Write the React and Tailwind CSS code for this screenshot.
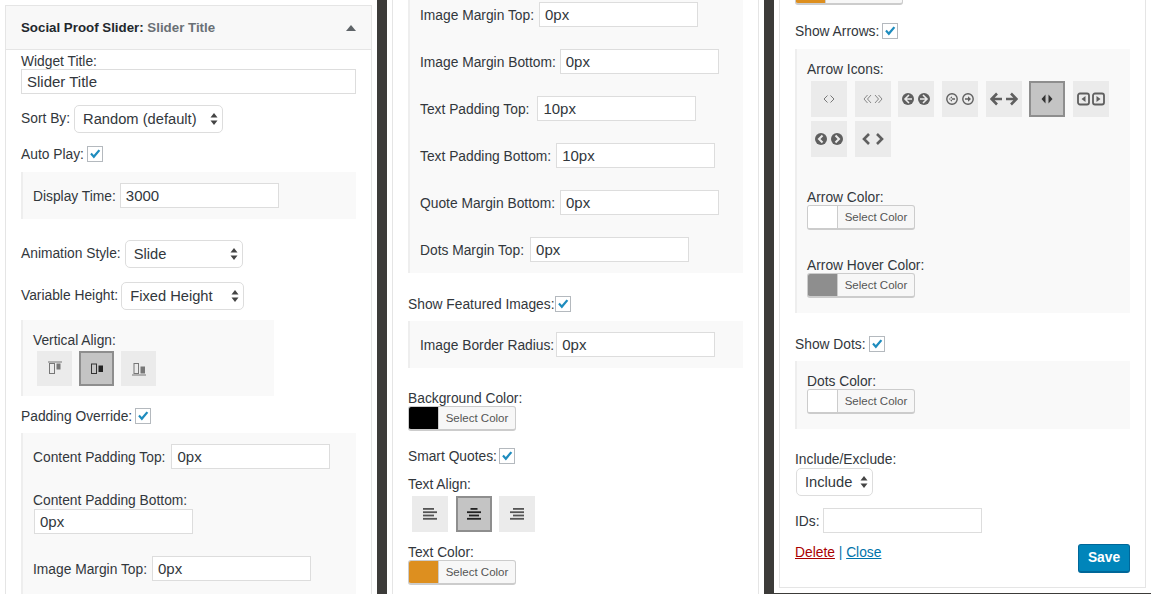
import React from "react";

const CheckBox = () => (
  <span className="inline-flex w-4 h-4 border border-[#b4b9be] bg-white items-center justify-center shrink-0">
    <svg viewBox="0 0 16 16" className="w-[14px] h-[14px]">
      <path d="M2.5 8.2 L4.3 6.6 L6.6 9 L12 2.8 L14 4.3 L6.7 13 Z" fill="#1e8cbe" />
    </svg>
  </span>
);

const TextInput = ({ value, className = "" }) => (
  <div className={`h-[25px] border border-[#ddd] bg-white pl-[5px] text-[15px] leading-[23px] text-[#32373c] ${className}`}>
    {value}
  </div>
);

const Field = ({ label, value, gap = "gap-[5px]", className = "" }) => (
  <div className={`flex items-center ${gap} ${className}`}>
    <span className="pt-[2px]">{label}</span>
    <TextInput value={value} className="w-[159px]" />
  </div>
);

const Select = ({ value, className = "" }) => (
  <div className={`h-[28px] border border-[#ddd] rounded-[5px] bg-white flex items-center justify-between pl-[8px] pr-[4px] text-[14.7px] text-[#32373c] ${className}`}>
    <span>{value}</span>
    <svg viewBox="0 0 8 12" className="w-[8px] h-[12px]">
      <path d="M4 0 L7.5 4.6 L0.5 4.6 Z M4 12 L7.5 7.4 L0.5 7.4 Z" fill="#444" />
    </svg>
  </div>
);

const ColorButton = ({ color, hideLabel, className = "" }) => (
  <div className={`w-[108px] h-[25px] flex border border-[#ccc] border-b-[2px] rounded-[3px] bg-[#f7f7f7] overflow-hidden ${className}`}>
    <span className="w-[30px] border-r border-[#ccc]" style={{ backgroundColor: color }} />
    <span className="flex-1 text-center text-[11.5px] leading-[22px] text-[#555]">{hideLabel ? "" : "Select Color"}</span>
  </div>
);

const Panel = ({ className = "", children }) => (
  <div className={`bg-[#f9f9f9] border-l-[2px] border-[#eeeeee] ${className}`}>{children}</div>
);

const IconBox = ({ active, size = "w-[36px] h-[36px]", children }) => (
  <div
    className={`${size} flex items-center justify-center shrink-0 ${
      active ? "bg-[#c4c4c4] border-[2px] border-[#8e8e8e]" : "bg-[#ebebeb]"
    }`}
  >
    {children}
  </div>
);

const Glyph = ({ w = 24, children }) => (
  <svg viewBox={`0 0 ${w} 14`} width={w} height={14} fill="#5f5f5f">
    {children}
  </svg>
);

const AlignTop = () => (
  <svg viewBox="0 0 16 16" width={16} height={16}>
    <rect x="1" y="0.5" width="14" height="1" fill="#777" />
    <rect x="2.5" y="2.5" width="5" height="10" fill="none" stroke="#777" />
    <rect x="9.5" y="2.5" width="4" height="6" fill="#777" />
  </svg>
);

const AlignMiddle = () => (
  <svg viewBox="0 0 16 16" width={16} height={16}>
    <rect x="2.5" y="3" width="5" height="9.5" fill="none" stroke="#333" />
    <rect x="9.5" y="4.5" width="4.5" height="6.5" fill="#222" />
  </svg>
);

const AlignBottom = () => (
  <svg viewBox="0 0 16 16" width={16} height={16}>
    <rect x="3" y="2.5" width="4.5" height="10" fill="none" stroke="#777" />
    <rect x="9.5" y="5.5" width="4.5" height="7" fill="#777" />
    <rect x="1" y="13.5" width="14" height="1" fill="#777" />
  </svg>
);

const AlignText = ({ kind }) => {
  const rows = {
    left: [11, 14, 11, 14],
    center: [7, 14, 10, 14],
    right: [11, 14, 11, 14],
  }[kind];
  return (
    <svg viewBox="0 0 14 12" width={14} height={12}>
      {rows.map((w, i) => {
        const x = kind === "left" ? 0 : kind === "right" ? 14 - w : (14 - w) / 2;
        return <rect key={i} x={x} y={i * 3.3} width={w} height="1.8" fill={kind === "center" ? "#222" : "#555"} />;
      })}
    </svg>
  );
};

const Label = ({ className = "", children }) => <div className={`h-[16px] leading-[18px] ${className}`}>{children}</div>;

const Check = ({ label, gap = "gap-[3px]", className = "" }) => (
  <div className={`flex items-center h-[16px] ${gap} ${className}`}>
    <span className="h-[16px] leading-[17px]">{label}</span>
    <CheckBox />
  </div>
);

const Card = ({ className = "", children }) => (
  <div className={`h-full bg-white overflow-hidden ${className}`}>{children}</div>
);

export default function App() {
  return (
    <div
      className="w-[1151px] h-[594px] overflow-hidden flex bg-[#3c3b39] text-[13.8px] leading-[16px] text-[#32373c]"
      style={{ fontFamily: '"Liberation Sans", Arial, sans-serif' }}
    >
      {/* first widget */}
      <div className="w-[377px] h-full bg-white pl-[5px] pr-[5px] pt-[5px] shrink-0">
        <Card className="border-x border-t border-[#e5e5e5]">
          <div className="h-[44px] bg-[#f8f8f8] border-b border-[#e5e5e5] flex items-center justify-between pl-[15px] pr-[15px]">
            <span className="font-bold text-[13.3px] text-[#23282d]">
              Social Proof Slider: <span className="text-[#6a7075]">Slider Title</span>
            </span>
            <svg viewBox="0 0 10 6" className="w-[10px] h-[6px]">
              <path d="M5 0 L10 6 L0 6 Z" fill="#5f6468" />
            </svg>
          </div>
          <div className="pl-[15px] pr-[15px]">
            <Label className="mt-[3px]">Widget Title:</Label>
            <TextInput value="Slider Title" className="w-[335px]" />
            <div className="flex items-center gap-[4px] mt-[11px]">
              <span>Sort By:</span>
              <Select value="Random (default)" className="w-[149px]" />
            </div>
            <Check label="Auto Play:" className="mt-[13px]" />
            <Panel className="w-[335px] h-[47px] mt-[10px] flex items-center pl-[10px]">
              <Field label="Display Time:" value="3000" gap="gap-[4px]" />
            </Panel>
            <div className="flex items-center gap-[4px] mt-[21px]">
              <span>Animation Style:</span>
              <Select value="Slide" className="w-[118px]" />
            </div>
            <div className="flex items-center gap-[3px] mt-[14px]">
              <span>Variable Height:</span>
              <Select value="Fixed Height" className="w-[123px]" />
            </div>
            <Panel className="w-[253px] h-[76px] mt-[10px] pl-[10px] pt-[12px]">
              <Label>Vertical Align:</Label>
              <div className="flex gap-[7px] mt-[3px] ml-[4px]">
                <IconBox size="w-[35px] h-[35px]"><AlignTop /></IconBox>
                <IconBox size="w-[35px] h-[35px]" active><AlignMiddle /></IconBox>
                <IconBox size="w-[35px] h-[35px]"><AlignBottom /></IconBox>
              </div>
            </Panel>
            <Check label="Padding Override:" className="mt-[12px]" />
            <Panel className="w-[335px] h-[170px] mt-[9px] pl-[10px] pt-[11px]">
              <Field label="Content Padding Top:" value="0px" gap="gap-[6px]" />
              <Label className="mt-[23px]">Content Padding Bottom:</Label>
              <TextInput value="0px" className="w-[159px] ml-[1px] mt-[1px]" />
              <Field label="Image Margin Top:" value="0px" className="mt-[22px]" />
            </Panel>
          </div>
        </Card>
      </div>

      {/* second widget */}
      <div className="w-[377px] h-full bg-white ml-[10px] pl-[5px] pr-[5px] shrink-0">
        <Card className="border-x border-[#e5e5e5] pl-[15px] pr-[15px]">
          <Panel className="w-[335px] h-[273px] pl-[10px] pt-[2px]">
            <Field label="Image Margin Top:" value="0px" />
            <Field label="Image Margin Bottom:" value="0px" gap="gap-[4px]" className="mt-[22px]" />
            <Field label="Text Padding Top:" value="10px" gap="gap-[8px]" className="mt-[22px]" />
            <Field label="Text Padding Bottom:" value="10px" className="mt-[22px]" />
            <Field label="Quote Margin Bottom:" value="0px" className="mt-[22px]" />
            <Field label="Dots Margin Top:" value="0px" gap="gap-[6px]" className="mt-[22px]" />
          </Panel>
          <Check label="Show Featured Images:" gap="gap-[1px]" className="mt-[23px]" />
          <Panel className="w-[335px] h-[47px] mt-[9px] flex items-center pl-[10px]">
            <Field label="Image Border Radius:" value="0px" gap="gap-[2px]" />
          </Panel>
          <Label className="mt-[22px]">Background Color:</Label>
          <ColorButton color="#000000" />
          <Check label="Smart Quotes:" gap="gap-[2px]" className="mt-[17px]" />
          <Label className="mt-[12px]">Text Align:</Label>
          <div className="flex gap-[7.5px] mt-[4px] ml-[4px]">
            <IconBox><AlignText kind="left" /></IconBox>
            <IconBox active><AlignText kind="center" /></IconBox>
            <IconBox><AlignText kind="right" /></IconBox>
          </div>
          <Label className="mt-[12px]">Text Color:</Label>
          <ColorButton color="#dd8f1f" />
        </Card>
      </div>

      {/* third widget */}
      <div className="w-[377px] h-[593px] bg-white ml-[10px] pl-[5px] pr-[5px] pb-[5px] shrink-0">
        <Card className="border-x border-b border-[#e5e5e5] pl-[15px] pr-[15px]">
          <ColorButton color="#dd8f1f" hideLabel className="-mt-[20px]" />
          <Check label="Show Arrows:" className="mt-[18px]" />
          <Panel className="w-[335px] h-[264px] mt-[10px] pl-[10px] pt-[12px]">
            <Label>Arrow Icons:</Label>
            <div className="flex flex-wrap gap-x-[7.7px] gap-y-[4px] w-[320px] mt-[4px] ml-[4px]">
              <IconBox>
                <Glyph w={14}><path d="M5.5 3.5 L2 7 L5.5 10.5 M8.5 3.5 L12 7 L8.5 10.5" fill="none" stroke="#777" /></Glyph>
              </IconBox>
              <IconBox>
                <Glyph w={20}><path d="M4.5 3 L1 7 L4.5 11 M8 3 L4.5 7 L8 11 M12 3 L15.5 7 L12 11 M15.5 3 L19 7 L15.5 11" fill="none" stroke="#888" /></Glyph>
              </IconBox>
              <IconBox>
                <Glyph w={28}>
                  <circle cx="6" cy="7" r="6" /><circle cx="22" cy="7" r="6" />
                  <path d="M7 3 L3 7 L7 11 M3.5 7 L10 7 M21 3 L25 7 L21 11 M24.5 7 L18 7" fill="none" stroke="#ebebeb" strokeWidth="1.6" />
                </Glyph>
              </IconBox>
              <IconBox>
                <Glyph w={28}>
                  <circle cx="6" cy="7" r="5.2" fill="none" stroke="#5f5f5f" strokeWidth="1.4" /><circle cx="22" cy="7" r="5.2" fill="none" stroke="#5f5f5f" strokeWidth="1.4" />
                  <path d="M6 4.2 L3 7 L6 9.8 Z M4 6.3 H9 V7.7 H4 Z M22 4.2 L25 7 L22 9.8 Z M19 6.3 H24 V7.7 H19 Z" />
                </Glyph>
              </IconBox>
              <IconBox>
                <Glyph w={28}>
                  <path d="M7 1.5 L1.5 7 L7 12.5 M2 7 L12 7 M21 1.5 L26.5 7 L21 12.5 M26 7 L16 7" fill="none" stroke="#5f5f5f" strokeWidth="2.6" />
                </Glyph>
              </IconBox>
              <IconBox active>
                <Glyph w={12}>
                  <path d="M4.5 2.5 V11.5 L0.5 7 Z M7.5 2.5 V11.5 L11.5 7 Z" fill="#333" />
                </Glyph>
              </IconBox>
              <IconBox>
                <Glyph w={28}>
                  <rect x="1" y="1.5" width="11" height="11" rx="2" fill="none" stroke="#5f5f5f" strokeWidth="1.8" />
                  <rect x="16" y="1.5" width="11" height="11" rx="2" fill="none" stroke="#5f5f5f" strokeWidth="1.8" />
                  <path d="M8.5 4 V10 L4.5 7 Z M19.5 4 V10 L23.5 7 Z" />
                </Glyph>
              </IconBox>
              <IconBox>
                <Glyph w={28}>
                  <circle cx="6" cy="7" r="6" /><circle cx="22" cy="7" r="6" />
                  <path d="M7.5 3.5 L4 7 L7.5 10.5 M20.5 3.5 L24 7 L20.5 10.5" fill="none" stroke="#ebebeb" strokeWidth="2" />
                </Glyph>
              </IconBox>
              <IconBox>
                <Glyph w={22}>
                  <path d="M7 2 L2 7 L7 12 M15 2 L20 7 L15 12" fill="none" stroke="#5f5f5f" strokeWidth="2.6" />
                </Glyph>
              </IconBox>
            </div>
            <Label className="mt-[32px]">Arrow Color:</Label>
            <ColorButton color="#ffffff" />
            <Label className="mt-[27px]">Arrow Hover Color:</Label>
            <ColorButton color="#8e8e8e" />
          </Panel>
          <Check label="Show Dots:" className="mt-[23px]" />
          <Panel className="w-[335px] h-[68px] mt-[9px] pl-[10px] pt-[12px]">
            <Label>Dots Color:</Label>
            <ColorButton color="#ffffff" />
          </Panel>
          <Label className="mt-[22px]">Include/Exclude:</Label>
          <Select value="Include" className="w-[77px] ml-[1px] mt-[1px]" />
          <div className="flex items-center gap-[3px] mt-[12px]">
            <span className="pt-[2px]">IDs:</span>
            <TextInput value="" className="w-[159px]" />
          </div>
          <div className="flex justify-between mt-[11px]">
            <div className="pt-[1px]">
              <span className="underline text-[#a00]">Delete</span>
              <span className="text-[#0073aa]"> | </span>
              <span className="underline text-[#0073aa]">Close</span>
            </div>
            <div className="w-[52px] h-[29px] rounded-[3px] bg-[#0085ba] border border-[#006799] border-b-[2px] text-white font-bold text-center leading-[25px]">
              Save
            </div>
          </div>
        </Card>
      </div>
    </div>
  );
}
